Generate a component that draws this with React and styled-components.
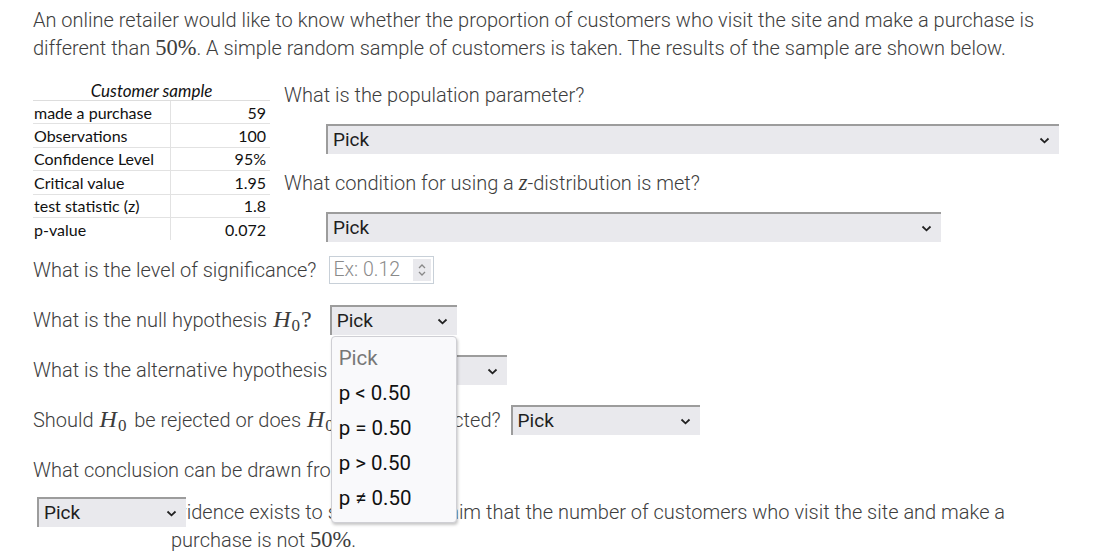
import styled, { createGlobalStyle } from "styled-components";

const Global = createGlobalStyle`
  body {
    margin: 0;
    background: #fff;
    font-family: Roboto, "Liberation Sans", sans-serif;
    color: #3d3d3d;
  }
`;

const Page = styled.div`
  width: 1045px;
  padding: 6px 0 0 33px;
  font-size: 20px;
  font-weight: 300;
  line-height: 28px;
`;

const Intro = styled.p`
  margin: 0 0 19px;
`;

const M = styled.span`
  font-family: "Liberation Serif", "DejaVu Serif", serif;
  font-size: ${(p) => (p.$big ? 24 : 22.5)}px;
  font-weight: 400;
  line-height: 0;
  font-style: ${(p) => (p.$italic ? "italic" : "normal")};
  margin: 0 ${(p) => (p.$big ? 3 : 0)}px 0 ${(p) => (p.$big ? 1 : 0)}px;
`;

const Sub = styled.sub`
  font-family: "Liberation Serif", serif;
  font-style: normal;
  font-size: 17px;
  line-height: 0;
  vertical-align: -4px;
  margin-left: 1px;
`;

const Top = styled.div`
  display: flow-root;
`;

const Table = styled.table`
  float: left;
  width: 237px;
  margin-right: 14px;
  border-collapse: collapse;
  font-family: Lato, "Open Sans", sans-serif;
  font-size: 16px;
  font-weight: 400;
  line-height: 17px;
  color: #111;
`;

const Caption = styled.th`
  font-style: italic;
  font-weight: 400;
  font-size: 17px;
  text-align: center;
  height: 19px;
  padding: 0;
  border-bottom: 1px solid #ddd;
`;

const Cell = styled.td`
  height: 22.4px;
  padding: 0 0 0 1px;
  border-bottom: 1px solid #e2e2e2;
  text-align: ${(p) => (p.$num ? "right" : "left")};
  padding-right: ${(p) => (p.$num ? "4px" : "0")};
  border-left: ${(p) => (p.$num ? "1px solid #e2e2e2" : "none")};
  &:last-child {
    width: 94px;
  }
  tr:last-child > & {
    border-bottom: none;
  }
`;

const Side = styled.div`
  overflow: hidden;
`;

const Question = styled.div`
  margin-bottom: 15px;
`;

const Indented = styled.div`
  display: flex;
  padding-left: 42px;
  margin-bottom: ${(p) => p.$after ?? 15}px;
`;

const SelectBox = styled.div`
  position: relative;
  display: inline-flex;
  align-items: center;
  justify-content: space-between;
  box-sizing: border-box;
  width: ${(p) => p.$w}px;
  height: 30px;
  padding: 0 9px 0 5px;
  background: #e9e9ed;
  border-top: 2px solid #9c9c9c;
  border-left: 2px solid #9c9c9c;
  font-family: Roboto, "Liberation Sans", sans-serif;
  font-size: 19px;
  font-weight: 400;
  line-height: 26px;
  color: #1e1e1e;
  text-indent: 0;
  flex: none;
`;

const Chevron = styled.svg`
  width: 11px;
  height: 7px;
  flex: none;
`;

const Select = ({ w, children }) => (
  <SelectBox $w={w}>
    <span>Pick</span>
    <Chevron viewBox="0 0 11 7">
      <path d="M1.5 1.5 L5.5 5.3 L9.5 1.5" fill="none" stroke="#222" strokeWidth="1.8" />
    </Chevron>
    {children}
  </SelectBox>
);

const Row = styled.div`
  display: flex;
  align-items: center;
  gap: ${(p) => p.$gap ?? 12}px;
  height: 30px;
  margin-bottom: ${(p) => p.$after ?? 20}px;
  white-space: nowrap;
`;

const NumberBox = styled.div`
  display: inline-flex;
  align-items: center;
  box-sizing: border-box;
  width: 105px;
  height: 28px;
  padding: 0 2px 0 3px;
  border: 1px solid #c8d0d8;
  font-size: 19.5px;
  color: #8a8a8a;
  justify-content: space-between;
`;

const Spin = styled.div`
  width: 18px;
  height: 22px;
  background: #e9e9ed;
  display: flex;
  align-items: center;
  justify-content: center;
`;

const Menu = styled.div`
  position: absolute;
  top: 29px;
  left: -1px;
  width: 126px;
  box-sizing: border-box;
  padding: 4px 0 6px;
  background: #f9f9fb;
  border: 1px solid #cfcfd4;
  border-radius: 4px;
  box-shadow: 1px 2px 3px rgba(0, 0, 0, 0.22);
  z-index: 5;
`;

const Option = styled.div`
  height: 35px;
  line-height: 35px;
  padding-left: 7px;
  font-size: 20.5px;
  color: ${(p) => (p.$muted ? "#777" : "#111")};
`;

const Conclusion = styled.p`
  margin: 0;
  padding-left: 138px;
  text-indent: -134px;
  line-height: 28px;
  & > ${SelectBox} {
    vertical-align: baseline;
    margin-bottom: -3px;
    margin-right: -24px;
  }
`;

const rows = [
  ["made a purchase", "59"],
  ["Observations", "100"],
  ["Confidence Level", "95%"],
  ["Critical value", "1.95"],
  ["test statistic (z)", "1.8"],
  ["p-value", "0.072"],
];

const H0 = ({ q }) => (
  <M $italic $big>
    H<Sub>0</Sub>
    {q && <M $big>?</M>}
  </M>
);

export default function App() {
  return (
    <Page>
      <Global />
      <Intro>
        An online retailer would like to know whether the proportion of customers who visit the
        site and make a purchase is different than <M>50%</M>. A simple random sample of customers
        is taken. The results of the sample are shown below.
      </Intro>

      <Top>
        <Table>
          <thead>
            <tr>
              <Caption colSpan={2}>Customer sample</Caption>
            </tr>
          </thead>
          <tbody>
            {rows.map(([k, v]) => (
              <tr key={k}>
                <Cell>{k}</Cell>
                <Cell $num>{v}</Cell>
              </tr>
            ))}
          </tbody>
        </Table>
        <Side>
          <Question>What is the population parameter?</Question>
          <Indented>
            <Select w={733} />
          </Indented>
          <Question>
            What condition for using a <M $italic>z</M>-distribution is met?
          </Question>
          <Indented $after={13}>
            <Select w={615} />
          </Indented>
        </Side>
      </Top>

      <Row $gap={13}>
        What is the level of significance?
        <NumberBox>
          Ex: 0.12
          <Spin>
            <svg width="10" height="16" viewBox="0 0 10 16">
              <path d="M2 6 L5 3 L8 6 M2 10 L5 13 L8 10" fill="none" stroke="#888" strokeWidth="1.3" />
            </svg>
          </Spin>
        </NumberBox>
      </Row>

      <Row $gap={12}>
        <span>
          What is the null hypothesis <H0 q />
        </span>
        <Select w={127}>
          <Menu>
            <Option $muted>Pick</Option>
            <Option>p &lt; 0.50</Option>
            <Option>p = 0.50</Option>
            <Option>p &gt; 0.50</Option>
            <Option>p ≠ 0.50</Option>
          </Menu>
        </Select>
      </Row>

      <Row $gap={3}>
        <span>
          What is the alternative hypothesis{" "}
          <M $italic $big>
            H<Sub>a</Sub>
            <M $big>?</M>
          </M>
        </span>
        <Select w={127} />
      </Row>

      <Row $gap={10}>
        <span>
          Should <H0 /> be rejected or does <H0 /> fail to be rejected?
        </span>
        <Select w={189} />
      </Row>

      <Row $after={12}>What conclusion can be drawn from the test?</Row>

      <Conclusion>
        <Select w={149} /> evidence exists to support the claim that the number of customers who
        visit the site and make a purchase is not <M>50%</M>.
      </Conclusion>
    </Page>
  );
}
